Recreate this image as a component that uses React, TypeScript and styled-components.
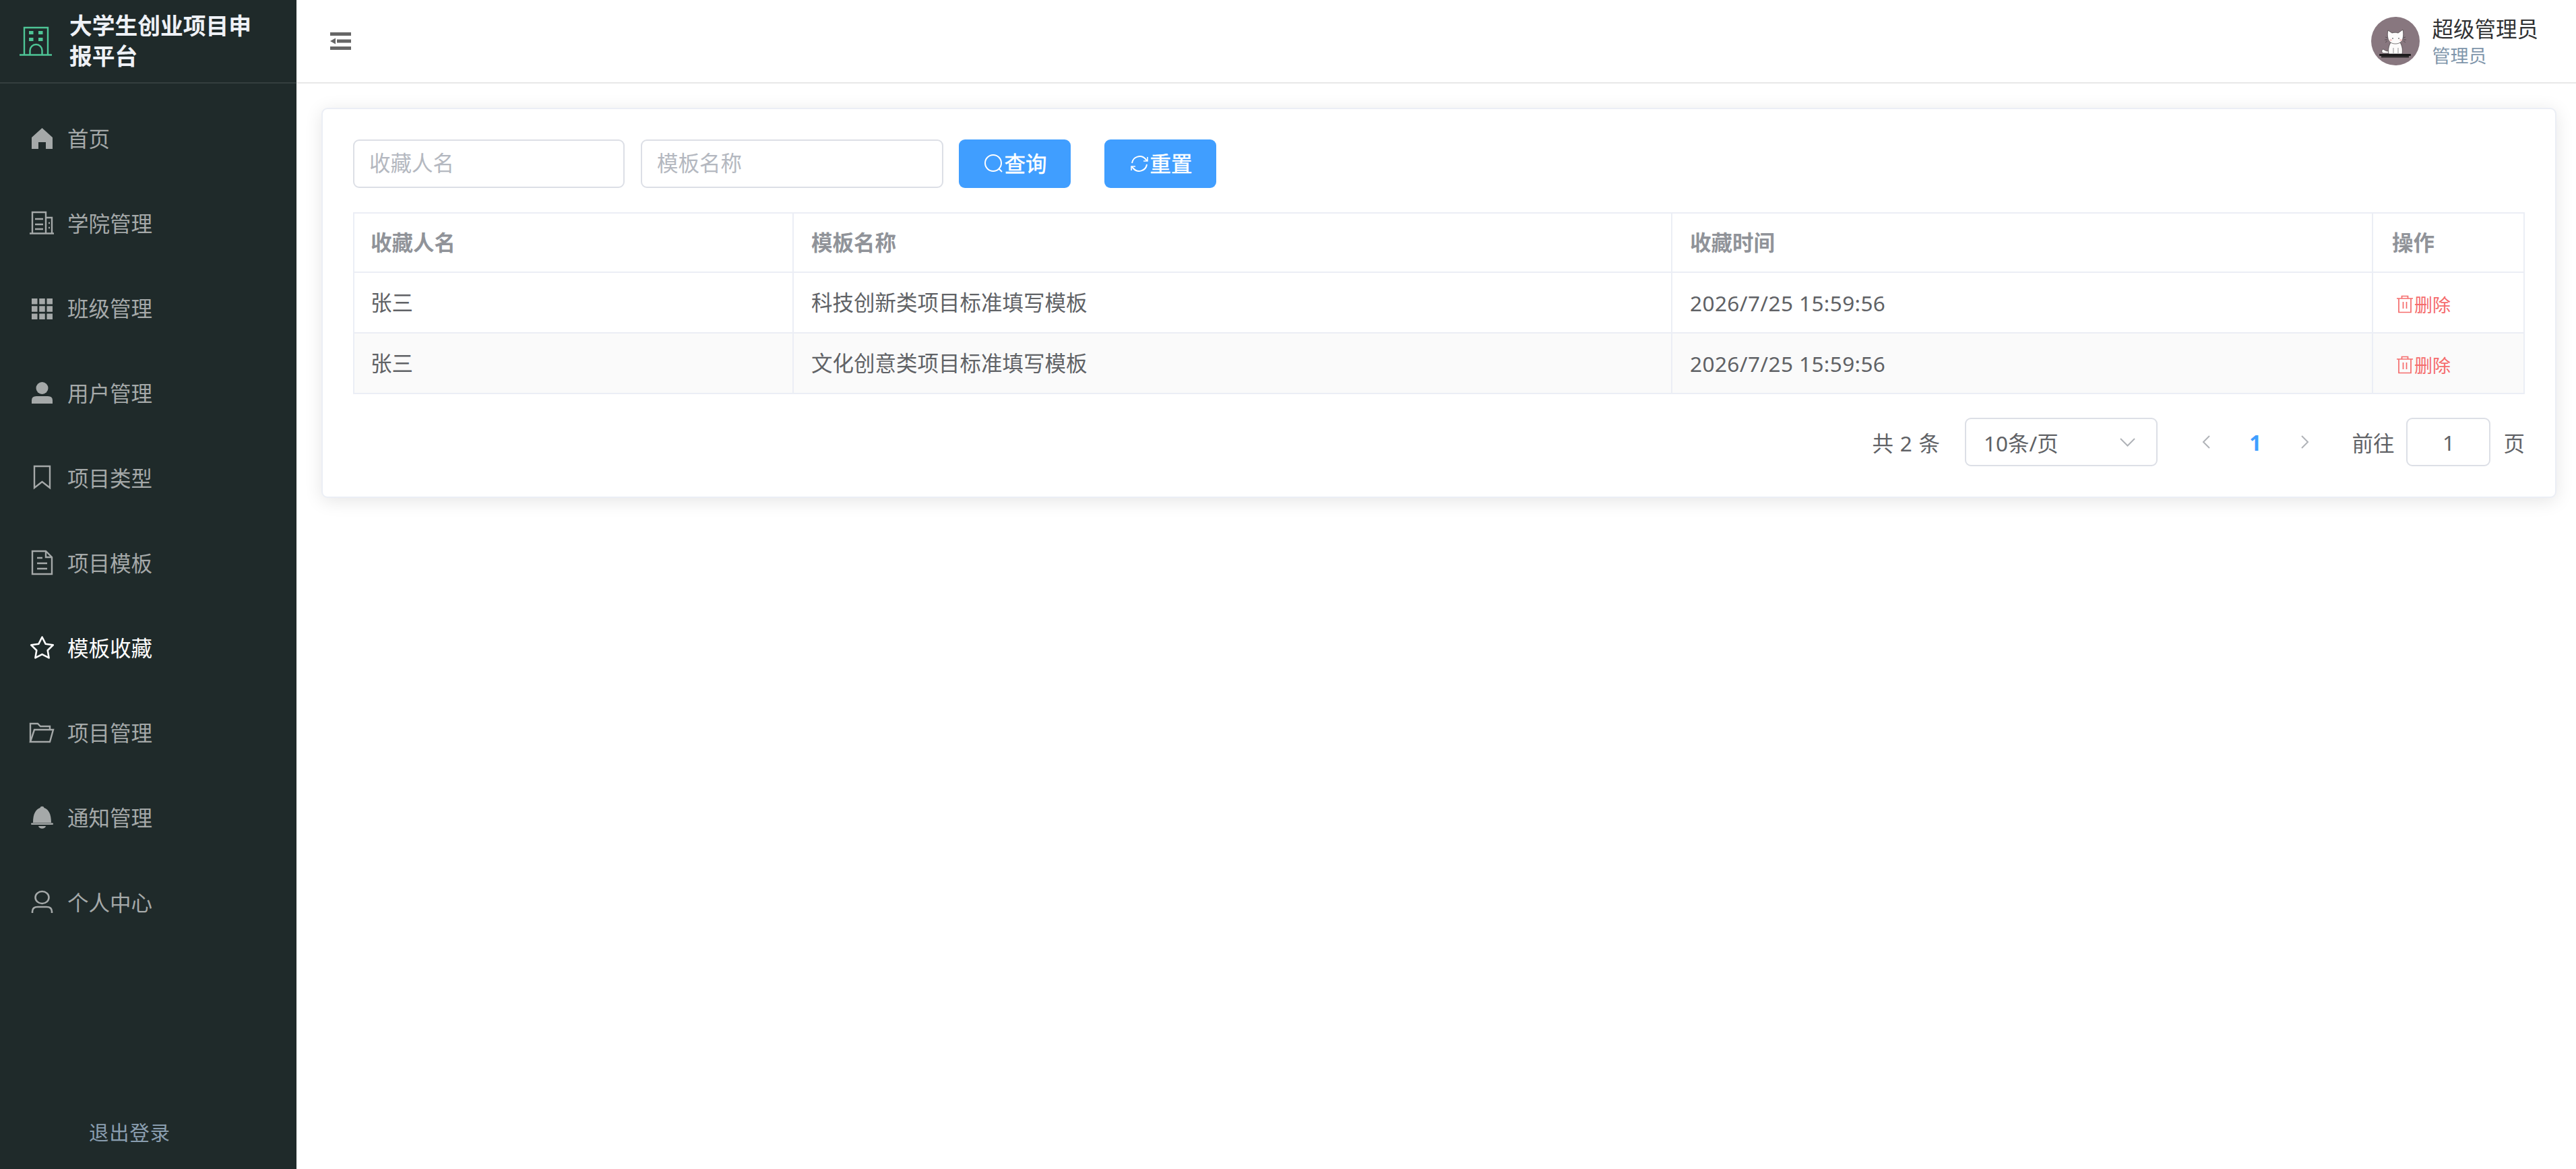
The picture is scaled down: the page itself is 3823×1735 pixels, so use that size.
import React from "react"
import styled, { createGlobalStyle } from "styled-components"

const GlobalStyle = createGlobalStyle`
  html, body {
    margin: 0;
    padding: 0;
    height: 100%;
    background: #fff;
  }
  body {
    font-family: "Noto Sans", "Noto Sans CJK SC", sans-serif;
    font-size: 31.5px;
    color: #606266;
  }
  * {
    box-sizing: border-box;
  }
`

const Layout = styled.div`
  display: flex;
  width: 100%;
  height: 100vh;
  overflow: hidden;
`

// --- sidebar ---

const Sidebar = styled.aside`
  display: flex;
  flex-direction: column;
  flex: 0 0 440px;
  background: #1f2a2a;
`

const Brand = styled.div`
  display: flex;
  align-items: center;
  gap: 26px;
  height: 124px;
  padding-left: 29px;
  border-bottom: 2px solid #343e3e;
`

const BrandTitle = styled.div`
  width: 300px;
  font-size: 33.75px;
  line-height: 45px;
  font-weight: 700;
  color: #eef1f6;
`

const Nav = styled.nav`
  display: flex;
  flex-direction: column;
  padding-top: 19px;
`

const NavItem = styled.div<{ $active?: boolean }>`
  display: flex;
  align-items: center;
  gap: 18px;
  height: 126px;
  padding-left: 42px;
  font-size: 31.5px;
  color: ${(p) => (p.$active ? "#ffffff" : "#a5a9a9")};
`

const NavIcon = styled.svg`
  flex: 0 0 40px;
  width: 40px;
  height: 40px;
`

const NavLabel = styled.span`
  padding-bottom: 4px;
`

const Logout = styled.div`
  margin-top: auto;
  padding: 0 0 34px 132px;
  font-size: 29.25px;
  line-height: 40px;
  letter-spacing: 1px;
  color: #8a9eb0;
`

// --- top bar ---

const Main = styled.main`
  display: flex;
  flex-direction: column;
  flex: 1;
  min-width: 0;
`

const TopBar = styled.header`
  display: flex;
  align-items: center;
  justify-content: space-between;
  height: 124px;
  padding: 0 56px 0 50px;
  border-bottom: 2px solid #e8e8e8;
`

const UserBox = styled.div`
  display: flex;
  align-items: center;
  gap: 18px;
`

const UserText = styled.div`
  display: flex;
  flex-direction: column;
`

const UserName = styled.span`
  font-size: 31.5px;
  line-height: 44px;
  color: #303133;
`

const UserRole = styled.span`
  font-size: 27px;
  line-height: 36px;
  color: #7f96ab;
`

const Content = styled.div`
  padding: 36px 29px 0 37px;
`

// --- card ---

const Card = styled.section`
  padding: 45px;
  background: #fff;
  border: 2px solid #ebeef5;
  border-radius: 9px;
  box-shadow: 0 4.5px 27px rgba(0, 0, 0, 0.1);
`

const FilterBar = styled.div`
  display: flex;
  align-items: center;
  height: 72px;
  margin-bottom: 36px;
`

const TextInput = styled.input<{ $width: number; $gap: number }>`
  width: ${(p) => p.$width}px;
  height: 72px;
  margin-right: ${(p) => p.$gap}px;
  padding: 0 22px 4px;
  font: inherit;
  color: #606266;
  background: #fff;
  border: 2px solid #dcdfe6;
  border-radius: 9px;
  outline: none;

  &::placeholder {
    color: #b4b8c0;
    opacity: 1;
  }
`

const Button = styled.button<{ $gap?: number }>`
  display: inline-flex;
  align-items: center;
  justify-content: center;
  width: 166px;
  height: 72px;
  margin-right: ${(p) => p.$gap ?? 0}px;
  padding: 0 0 4px 2px;
  font: inherit;
  -webkit-text-stroke: 0.5px currentColor;
  color: #fff;
  background: #409eff;
  border: none;
  border-radius: 9px;
`

const ButtonIcon = styled.svg`
  width: 30px;
  height: 30px;
  margin-top: 4px;
`

// --- table ---

const Table = styled.div`
  border-top: 2px solid #ebeef5;
  border-left: 2px solid #ebeef5;
`

const Row = styled.div<{ $striped?: boolean; $head?: boolean }>`
  display: grid;
  grid-template-columns: 652px 1304px 1040px 225px;
  height: ${(p) => (p.$head ? 88 : 90)}px;
  background: ${(p) => (p.$striped ? "#fafafa" : "#fff")};
  border-bottom: 2px solid #ebeef5;
`

const Cell = styled.div<{ $head?: boolean; $pad?: number }>`
  display: flex;
  align-items: center;
  padding: 0 0 4px ${(p) => p.$pad ?? 26}px;
  border-right: 2px solid #ebeef5;
  font-weight: ${(p) => (p.$head ? 700 : 400)};
  color: ${(p) => (p.$head ? "#909399" : "#606266")};
`

const TimeText = styled.span`
  margin-top: 4px;
  letter-spacing: 0.42px;
`

const DeleteLink = styled.span`
  display: inline-flex;
  align-items: center;
  gap: 1px;
  margin: 8px 0 0 6px;
  font-size: 27px;
  color: #f56c6c;
`

const TrashIcon = styled.svg`
  width: 26px;
  height: 27px;
`

// --- pagination ---

const Pagination = styled.div`
  display: flex;
  align-items: center;
  justify-content: flex-end;
  height: 72px;
  margin-top: 35px;
  white-space: pre;
`

const Total = styled.span`
  margin-right: 37px;
  word-spacing: 1.5px;
`

const PageSize = styled.div`
  display: flex;
  align-items: center;
  justify-content: space-between;
  width: 286px;
  height: 72px;
  margin-right: 35px;
  padding: 0 31px 0 26px;
  border: 2px solid #dcdfe6;
  border-radius: 9px;
`

const Pager = styled.div`
  display: grid;
  grid-template-columns: repeat(3, 73.5px);
  margin-right: 33px;
`

const PagerCell = styled.span<{ $active?: boolean }>`
  display: flex;
  align-items: center;
  justify-content: center;
  height: 72px;
  font-weight: 700;
  color: ${(p) => (p.$active ? "#409eff" : "#b0b3b8")};
`

const GotoInput = styled.input`
  width: 125px;
  height: 72px;
  margin: 0 19px 0 18px;
  padding: 0;
  font: inherit;
  color: #606266;
  text-align: center;
  border: 2px solid #dcdfe6;
  border-radius: 9px;
  outline: none;
`

const stroke = { fill: "none", stroke: "currentColor", strokeWidth: 2.4 }

const icons: Record<string, React.ReactNode> = {
  home: <path fill="currentColor" d="M20.500 4 36 18v17H26V25H15v10H5V18z" />,
  office: (
    <g {...stroke}>
      <path d="M6 34V3h20v31M26 11h9v23M2 34.500h36M10 13h12M10 21h12M10 28h12M30 19h2M30 26h2" />
    </g>
  ),
  grid: (
    <g fill="currentColor">
      {[5, 16.25, 27.5].flatMap((y) =>
        [5, 16.25, 27.5].map((x) => <rect key={`${x}-${y}`} x={x} y={y} width="8.500" height="8.500" />)
      )}
    </g>
  ),
  user: (
    <g fill="currentColor">
      <circle cx="20.500" cy="12" r="9" />
      <path d="M5 35v-5q0-6 7-6h17q7 0 7 6v5z" />
    </g>
  ),
  bookmark: <path {...stroke} d="M9 2h23v32l-11.500-9L9 34z" />,
  document: (
    <g {...stroke}>
      <path d="M6 2h20l9 9v25H6z" />
      <path d="M26 2v9h9M13 12h8M13 20h15M13 28h15" />
    </g>
  ),
  star: (
    <path
      fill="none"
      stroke="currentColor"
      strokeWidth="2.600"
      strokeLinejoin="round"
      d="M20.500 3.500 25.600 13.700 36.800 15.300 28.700 23.200 30.600 34.400 20.500 29.100 10.400 34.400 12.300 23.200 4.200 15.300 15.400 13.700z"
    />
  ),
  folder: (
    <g {...stroke}>
      <path d="M3 33V6h11l4 4h14v5" />
      <path d="M3 33h29l5-18H9z" />
    </g>
  ),
  bell: (
    <g fill="currentColor">
      <path d="M7 27C7 14 11 7 17.500 5c.5-3 5.500-3 6 0C30 7 34 14 34 27z" />
      <rect x="4" y="27.500" width="33" height="2.500" rx="1.200" />
      <path d="M15 32h11c-1 5-10 5-11 0z" />
    </g>
  ),
  person: (
    <g {...stroke} strokeWidth="2.600">
      <ellipse cx="20.500" cy="12" rx="10" ry="9" />
      <path d="M6 35v-2q0-7 8-7h13q8 0 8 7v2" />
    </g>
  ),
}

const menu = [
  { icon: "home", label: "首页" },
  { icon: "office", label: "学院管理" },
  { icon: "grid", label: "班级管理" },
  { icon: "user", label: "用户管理" },
  { icon: "bookmark", label: "项目类型" },
  { icon: "document", label: "项目模板" },
  { icon: "star", label: "模板收藏", active: true },
  { icon: "folder", label: "项目管理" },
  { icon: "bell", label: "通知管理" },
  { icon: "person", label: "个人中心" },
]

const rows = [
  { user: "张三", template: "科技创新类项目标准填写模板", time: "2026/7/25 15:59:56" },
  { user: "张三", template: "文化创意类项目标准填写模板", time: "2026/7/25 15:59:56" },
]

const Logo = () => (
  <svg width="48" height="44" viewBox="0 0 48 44">
    <g fill="none" stroke="#4ec596" strokeWidth="2.400">
      <path d="M7 42V2h35v40M0 42.500h48" />
      <path d="M15.500 42v-6a9 9 0 0 1 18 0v6" />
    </g>
    <g fill="#4ec596">
      <rect x="14" y="7" width="6.500" height="5" />
      <rect x="28" y="7" width="6.500" height="5" />
      <rect x="14" y="17" width="6.500" height="5" />
      <rect x="28" y="17" width="6.500" height="5" />
    </g>
  </svg>
)

const CollapseIcon = () => (
  <svg width="31" height="26" viewBox="0 0 31 26" fill="#666">
    <rect width="31" height="5" />
    <rect y="21" width="31" height="5" />
    <rect x="10" y="10.500" width="21" height="5" />
    <path d="M0 13 8 8.500v9z" />
  </svg>
)

const CatAvatar = () => (
  <svg width="72" height="72" viewBox="0 0 72 72">
    <circle cx="36" cy="36" r="36" fill="#88777f" />
    <path d="M18 54c-3-1-3-5 0-6 2 1 3 3 8 3v3z" fill="#fbf8f8" stroke="#2a2628" strokeWidth="0.600" />
    <path d="M29 38c-3 5-4 11-3 17h20c1-6 0-12-3-17z" fill="#fdfbfb" stroke="#2a2628" strokeWidth="0.600" />
    <path d="M25 32c-1-4-1-8 0-12l6 4c3-1 6-1 9 0l7-5c1 5 1 9 0 13-1 5-5 8-11 8s-10-3-11-8z" fill="#fdfbfb" stroke="#2a2628" strokeWidth="0.600" />
    <path d="M33 46v8M40 46v8" stroke="#2a2628" strokeWidth="0.500" />
    <circle cx="32" cy="32" r="0.800" fill="#222" />
    <circle cx="41" cy="32" r="0.800" fill="#222" />
    <circle cx="29" cy="34.500" r="1.800" fill="#f6cccc" />
    <circle cx="44" cy="34.500" r="1.800" fill="#f6cccc" />
    <path d="M24 31l-3-1M24 34h-4M24 36l-3 2M48 31l3-1M48 34h4M48 36l3 2" stroke="#2a2628" strokeWidth="0.500" />
    <rect x="12" y="55" width="47" height="3" rx="1" fill="#1c1a1c" />
    <rect x="15" y="58" width="41" height="2.500" fill="#2b282a" />
  </svg>
)

const Chevron = ({ dir }: { dir: "left" | "right" | "down" }) => {
  if (dir === "down") {
    return (
      <svg width="23" height="13" viewBox="0 0 23 13" fill="none" stroke="#b0b3b8" strokeWidth="2">
        <path d="M1 1l10.500 10.500L22 1" />
      </svg>
    )
  }
  return (
    <svg width="12" height="20" viewBox="0 0 12 20" fill="none" stroke="currentColor" strokeWidth="2">
      <path d={dir === "left" ? "M11 1 2 10l9 9" : "M1 1l9 9-9 9"} />
    </svg>
  )
}

const App: React.FC = () => {
  return (
    <Layout>
      <GlobalStyle />
      <Sidebar>
        <Brand>
          <Logo />
          <BrandTitle>大学生创业项目申报平台</BrandTitle>
        </Brand>
        <Nav>
          {menu.map((item) => (
            <NavItem key={item.label} $active={item.active}>
              <NavIcon viewBox="0 0 40 40">{icons[item.icon]}</NavIcon>
              <NavLabel>{item.label}</NavLabel>
            </NavItem>
          ))}
        </Nav>
        <Logout>退出登录</Logout>
      </Sidebar>
      <Main>
        <TopBar>
          <CollapseIcon />
          <UserBox>
            <CatAvatar />
            <UserText>
              <UserName>超级管理员</UserName>
              <UserRole>管理员</UserRole>
            </UserText>
          </UserBox>
        </TopBar>
        <Content>
          <Card>
            <FilterBar>
              <TextInput $width={403} $gap={24} placeholder="收藏人名" />
              <TextInput $width={449} $gap={23} placeholder="模板名称" />
              <Button $gap={50}>
                <ButtonIcon viewBox="0 0 30 30" fill="none" stroke="currentColor" strokeWidth="2">
                  <circle cx="14" cy="14" r="12" />
                  <path d="M22.500 22.500 27 27" />
                </ButtonIcon>
                查询
              </Button>
              <Button>
                <ButtonIcon viewBox="0 0 30 30" fill="none" stroke="currentColor" strokeWidth="2">
                  <path d="M4 14A11.500 11.500 0 0 1 24 8l2 2.500" />
                  <path d="M26 16A11.500 11.500 0 0 1 6 22l-2-2.500" />
                  <path d="M21 11h6V5M9 19H3v6" strokeWidth="1.600" />
                </ButtonIcon>
                重置
              </Button>
            </FilterBar>
            <Table>
              <Row $head>
                <Cell $head $pad={24}>收藏人名</Cell>
                <Cell $head>模板名称</Cell>
                <Cell $head>收藏时间</Cell>
                <Cell $head $pad={28}>操作</Cell>
              </Row>
              {rows.map((row, i) => (
                <Row key={row.template} $striped={i % 2 === 1}>
                  <Cell $pad={24}>{row.user}</Cell>
                  <Cell>{row.template}</Cell>
                  <Cell>
                    <TimeText>{row.time}</TimeText>
                  </Cell>
                  <Cell $pad={28}>
                    <DeleteLink>
                      <TrashIcon viewBox="0 0 26 27" fill="none" stroke="currentColor" strokeWidth="1.700">
                        <path d="M1 5h24M8.500 5V1.500h9V5M4 5v20.500h18V5M10.500 10v10M15.500 10v10" />
                      </TrashIcon>
                      删除
                    </DeleteLink>
                  </Cell>
                </Row>
              ))}
            </Table>
            <Pagination>
              <Total>共 2 条</Total>
              <PageSize>
                10条/页
                <Chevron dir="down" />
              </PageSize>
              <Pager>
                <PagerCell>
                  <Chevron dir="left" />
                </PagerCell>
                <PagerCell $active>1</PagerCell>
                <PagerCell>
                  <Chevron dir="right" />
                </PagerCell>
              </Pager>
              前往
              <GotoInput defaultValue="1" />
              页
            </Pagination>
          </Card>
        </Content>
      </Main>
    </Layout>
  )
}

export default App
